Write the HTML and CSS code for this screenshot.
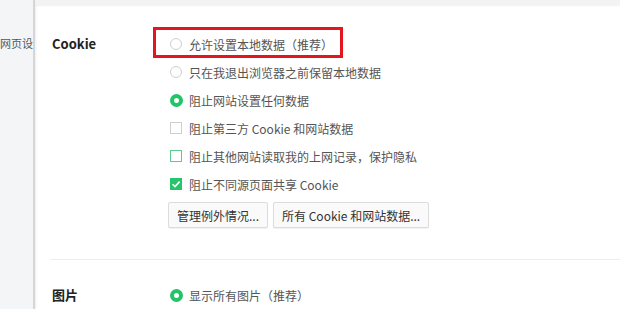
FILE: index.html
```html
<!DOCTYPE html>
<html lang="zh-CN">
<head>
<meta charset="utf-8">
<title>Cookie 设置</title>
<link rel="stylesheet" href="styles.css">
</head>
<body>
<div class="app">
  <aside class="sidebar"><span class="side-item">网页设</span></aside>
  <main class="main">
    <div class="topbar"></div>
    <section class="group">
      <div class="label">Cookie</div>
      <div class="options">
        <div class="row"><span class="radio"></span><span class="txt">允许设置本地数据（推荐）</span></div>
        <div class="row"><span class="radio"></span><span class="txt">只在我退出浏览器之前保留本地数据</span></div>
        <div class="row"><span class="radio on"></span><span class="txt">阻止网站设置任何数据</span></div>
        <div class="row"><span class="check"></span><span class="txt">阻止第三方 Cookie 和网站数据</span></div>
        <div class="row"><span class="check hover"></span><span class="txt">阻止其他网站读取我的上网记录，保护隐私</span></div>
        <div class="row"><span class="check on"><svg viewBox="0 0 12 12" width="12" height="12"><path d="M2.6 6.2 L5 8.6 L9.6 3.6" fill="none" stroke="#fff" stroke-width="1.6"/></svg></span><span class="txt">阻止不同源页面共享 Cookie</span></div>
        <div class="buttons">
          <button class="btn">管理例外情况...</button>
          <button class="btn">所有 Cookie 和网站数据...</button>
        </div>
      </div>
    </section>
    <div class="divider"></div>
    <section class="group second">
      <div class="label">图片</div>
      <div class="options">
        <div class="row"><span class="radio on"></span><span class="txt">显示所有图片（推荐）</span></div>
      </div>
    </section>
  </main>
  <div class="highlight"></div>
</div>
</body>
</html>
```

FILE: styles.css
```css
* { box-sizing: border-box; }
html, body { margin: 0; padding: 0; }
body {
  width: 620px;
  height: 309px;
  overflow: hidden;
  background: #fff;
  font-family: "Noto Sans CJK SC", "Microsoft YaHei", "Noto Sans", sans-serif;
  font-size: 12px;
  color: #555;
}
.app {
  position: relative;
  display: flex;
  height: 309px;
}
.sidebar {
  width: 35px;
  flex: none;
  background: #f4f5f6;
  border-right: 2px solid #d6d6d6;
  box-shadow: 1px 0 2px rgba(0,0,0,0.08);
  white-space: nowrap;
  padding-top: 34px;
}
.side-item {
  display: block;
  font-size: 11px;
  line-height: 18px;
  color: #555;
}
.main {
  flex: 1;
  display: flex;
  flex-direction: column;
}
.topbar {
  height: 6px;
  background: #f3f3f3;
  box-shadow: 0 1px 2px rgba(0,0,0,0.06);
}
.group {
  display: flex;
  padding: 25px 0 0 17px;
}
.label {
  width: 118px;
  flex: none;
  line-height: 28px;
  font-size: 13px;
  font-weight: bold;
  color: #222;
}
.options {
  display: flex;
  flex-direction: column;
}
.row {
  height: 28px;
  display: flex;
  align-items: center;
  gap: 7px;
}
.txt { color: #555; }
.radio {
  width: 12px;
  height: 12px;
  border: 1px solid #cfcfcf;
  border-radius: 50%;
  background: #fff;
  flex: none;
}
.radio.on {
  border: 4px solid #22c468;
  width: 13px;
  height: 13px;
  margin-right: -1px;
}
.check {
  width: 12px;
  height: 12px;
  border: 1px solid #cfcfcf;
  background: #fff;
  flex: none;
  display: flex;
}
.check.hover { border-color: #5ccb8c; }
.check.on {
  border: none;
  background: #27c46b;
}
.buttons {
  display: flex;
  gap: 5px;
  margin: 4px 0 0 -2px;
}
.btn {
  height: 26px;
  padding: 0 8px;
  font: inherit;
  color: #333;
  background: #fafafa;
  border: 1px solid #dcdcdc;
  border-radius: 2px;
  box-shadow: 0 1px 1px rgba(0,0,0,0.06);
}
.divider {
  height: 1px;
  background: #eeeeee;
  margin: 31px 0 0 15px;
}
.group.second { padding-top: 21px; }
.highlight {
  position: absolute;
  left: 153px;
  top: 27px;
  width: 190px;
  height: 31px;
  border: 3px solid #e3161e;
}
```
